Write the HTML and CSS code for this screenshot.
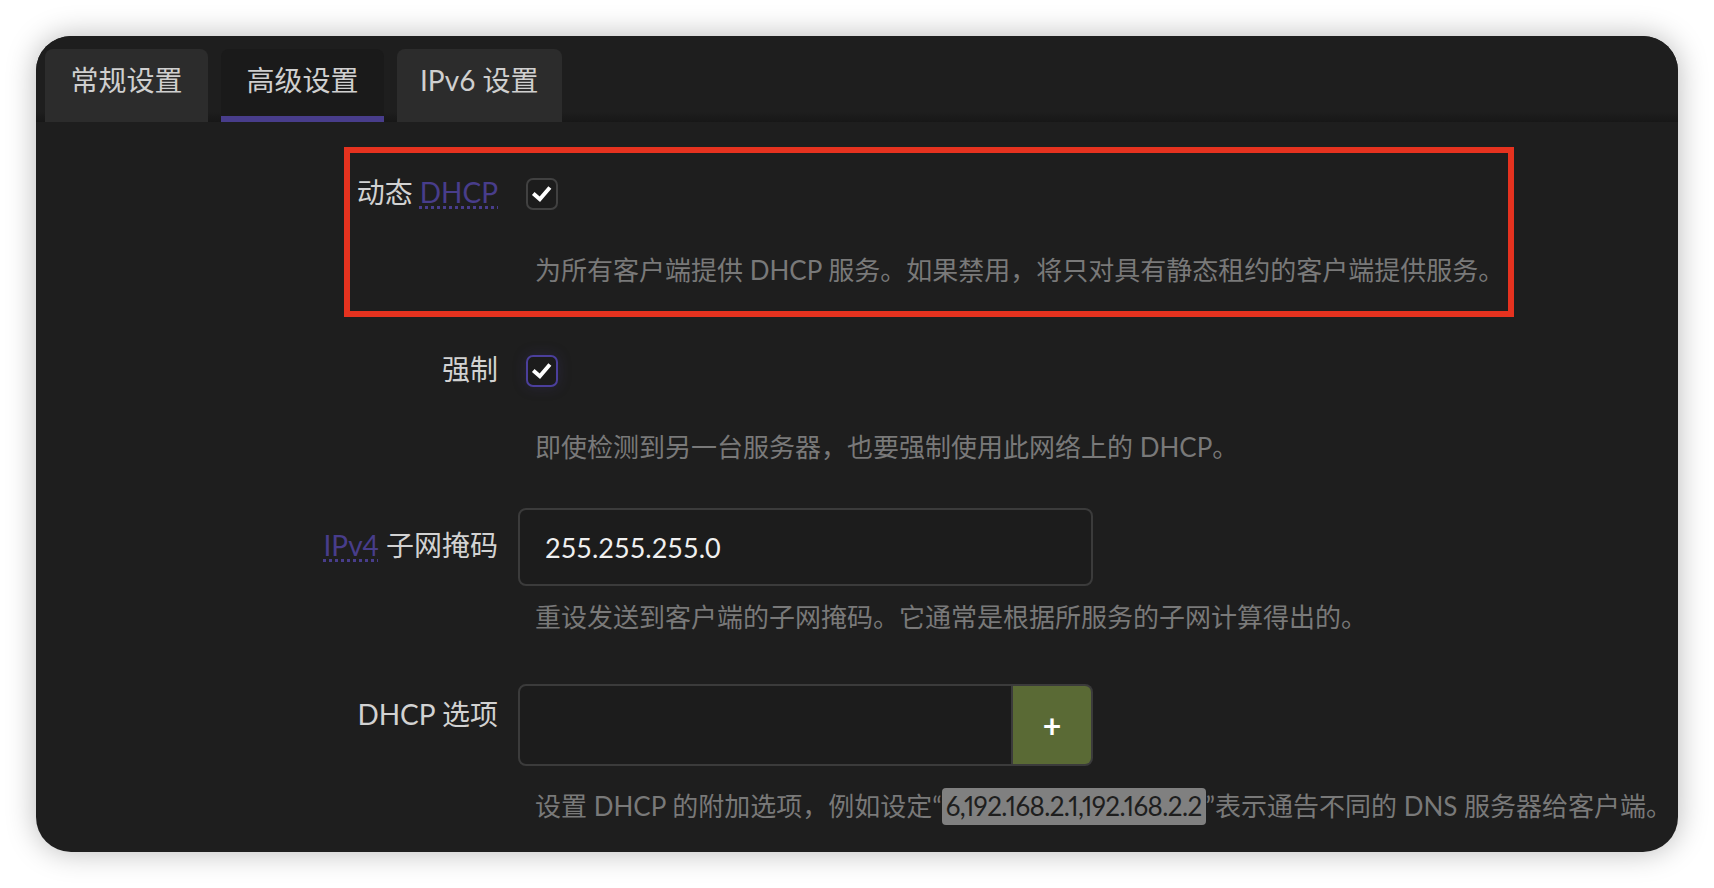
FILE: index.html
```html
<!DOCTYPE html>
<html lang="zh-CN">

<head>
    <meta charset="UTF-8">
    <meta name="viewport" content="width=device-width, initial-scale=1.0">
    <title>DHCP 服务器 - 高级设置</title>
    <link rel="stylesheet" href="styles.css">
</head>

<body>
    <div class="window">
        <ul class="cbi-tabmenu">
            <li class="cbi-tab">常规设置</li>
            <li class="cbi-tab active">高级设置</li>
            <li class="cbi-tab">IPv6 设置</li>
        </ul>

        <div class="cbi-tabpanel">
            <!-- 标注框 -->
            <div class="mark-box"></div>

            <div class="cbi-value">
                <label class="cbi-value-title">动态 <abbr title="Dynamic Host Configuration Protocol">DHCP</abbr></label>
                <div class="cbi-value-field">
                    <div class="field-line">
                        <span class="cbi-checkbox">
                            <svg viewBox="0 0 32 32" width="28" height="28"><polyline points="6,15.5 13.5,22 25,8.5" /></svg>
                        </span>
                    </div>
                    <div class="cbi-value-description check-desc">为所有客户端提供 DHCP 服务。如果禁用，将只对具有静态租约的客户端提供服务。</div>
                </div>
            </div>

            <div class="cbi-value">
                <label class="cbi-value-title">强制</label>
                <div class="cbi-value-field">
                    <div class="field-line">
                        <span class="cbi-checkbox focused">
                            <svg viewBox="0 0 32 32" width="28" height="28"><polyline points="6,15.5 13.5,22 25,8.5" /></svg>
                        </span>
                    </div>
                    <div class="cbi-value-description check-desc">即使检测到另一台服务器，也要强制使用此网络上的 DHCP。</div>
                </div>
            </div>

            <div class="cbi-value input-row">
                <label class="cbi-value-title"><abbr title="Internet Protocol Version 4">IPv4</abbr> 子网掩码</label>
                <div class="cbi-value-field">
                    <input class="cbi-input-text" type="text" value="255.255.255.0">
                    <div class="cbi-value-description">重设发送到客户端的子网掩码。它通常是根据所服务的子网计算得出的。</div>
                </div>
            </div>

            <div class="cbi-value dynlist">
                <label class="cbi-value-title">DHCP 选项</label>
                <div class="cbi-value-field">
                    <div class="cbi-dynlist">
                        <input class="cbi-input-text" type="text" value="">
                        <button class="cbi-button-add">+</button>
                    </div>
                    <div class="cbi-value-description">设置 DHCP 的附加选项，例如设定“<code>6,192.168.2.1,192.168.2.2</code>”表示通告不同的 DNS 服务器给客户端。</div>
                </div>
            </div>
        </div>
    </div>
</body>

</html>
```

FILE: styles.css
```css
* {
    margin: 0;
    padding: 0;
    box-sizing: border-box;
}

body {
    font-family: 'Lato', 'Noto Sans CJK SC', sans-serif;
    background: #ffffff;
    padding: 36px;
    height: 100vh;
}

.window {
    height: 100%;
    background: #1e1e1e;
    border-radius: 35px;
    box-shadow: 0 0 30px rgba(0, 0, 0, 0.28);
    overflow: hidden;
}

/* 标签页 */
.cbi-tabmenu {
    list-style: none;
    display: flex;
    gap: 13px;
    height: 86px;
    padding: 13px 9px 0;
    background: linear-gradient(to bottom, #1e1e1e 0%, #1e1e1e 88%, #171717 100%);
}

.cbi-tab {
    height: 73px;
    padding: 13px 25.5px 0;
    font-size: 28px;
    line-height: 36px;
    color: #cfcfcf;
    background: #2c2c2c;
    border-radius: 8px 8px 0 0;
}

.cbi-tab.active {
    background: #1a1a1a;
    border-bottom: 6px solid #483d8b;
}

.cbi-tab:last-child {
    padding: 13px 23px 0;
}

.cbi-tabpanel {
    position: relative;
    padding-top: 33px;
}

.mark-box {
    position: absolute;
    top: 25px;
    left: 308px;
    width: 1170px;
    height: 170px;
    border: 6px solid #e5321f;
    pointer-events: none;
}

/* 表单行 */
.cbi-value {
    display: grid;
    grid-template-columns: 442px 1fr;
    column-gap: 20px;
    padding-left: 20px;
}

.cbi-value + .cbi-value {
    margin-top: 44px;
}

.cbi-value.input-row {
    margin-top: 43px;
}

.cbi-value.dynlist {
    margin-top: 49px;
}

.cbi-value-title {
    text-align: right;
    font-size: 28px;
    line-height: 36px;
    padding-top: 19px;
    color: #d2d2d2;
}

.dynlist .cbi-value-title {
    padding-top: 12px;
}

abbr {
    color: #483d8b;
    text-decoration: underline dotted #483d8b;
    text-decoration-thickness: 3px;
    text-underline-offset: 3px;
    cursor: help;
}

.field-line {
    height: 78px;
    display: flex;
    align-items: center;
    padding-left: 8px;
}

.cbi-checkbox {
    width: 32px;
    height: 32px;
    display: flex;
    align-items: center;
    justify-content: center;
    border: 2px solid #414141;
    border-radius: 7px;
    background: #1c1c1c;
}

.cbi-checkbox.focused {
    border-color: #4b3f9c;
    box-shadow: 0 0 14px rgba(72, 61, 139, 0.25);
}

.cbi-checkbox svg polyline {
    fill: none;
    stroke: #ffffff;
    stroke-width: 4.5;
    stroke-linejoin: miter;
}

.cbi-input-text {
    width: 575px;
    height: 78px;
    padding: 0 25px;
    background: #1c1c1c;
    border: 2px solid #3b3b3b;
    border-radius: 8px;
    color: #f0f0f0;
    font-family: inherit;
    font-size: 27px;
    outline: none;
}

.cbi-dynlist {
    display: flex;
    width: 575px;
    height: 82px;
}

.cbi-dynlist .cbi-input-text {
    flex: 1;
    width: auto;
    height: 100%;
    border-radius: 8px 0 0 8px;
}

.cbi-button-add {
    width: 80px;
    background: #5a6a35;
    border: 2px solid #3b3b3b;
    border-left: none;
    border-radius: 0 8px 8px 0;
    color: #ffffff;
    font-family: inherit;
    font-size: 32px;
    font-weight: 700;
    cursor: pointer;
}

.cbi-value-description {
    margin-top: 13px;
    padding-left: 17px;
    font-size: 26px;
    line-height: 36px;
    color: #797979;
    white-space: nowrap;
}

.check-desc {
    margin-top: 19px;
}

.dynlist .cbi-value-description {
    margin-top: 22px;
}

code {
    font-family: inherit;
    font-size: 26px;
    font-variant-numeric: proportional-nums;
    letter-spacing: -0.6px;
    color: #1e1e1e;
    background: #808080;
    padding: 0 4px;
    border-radius: 4px;
    display: inline-block;
    line-height: 37px;
}
```
